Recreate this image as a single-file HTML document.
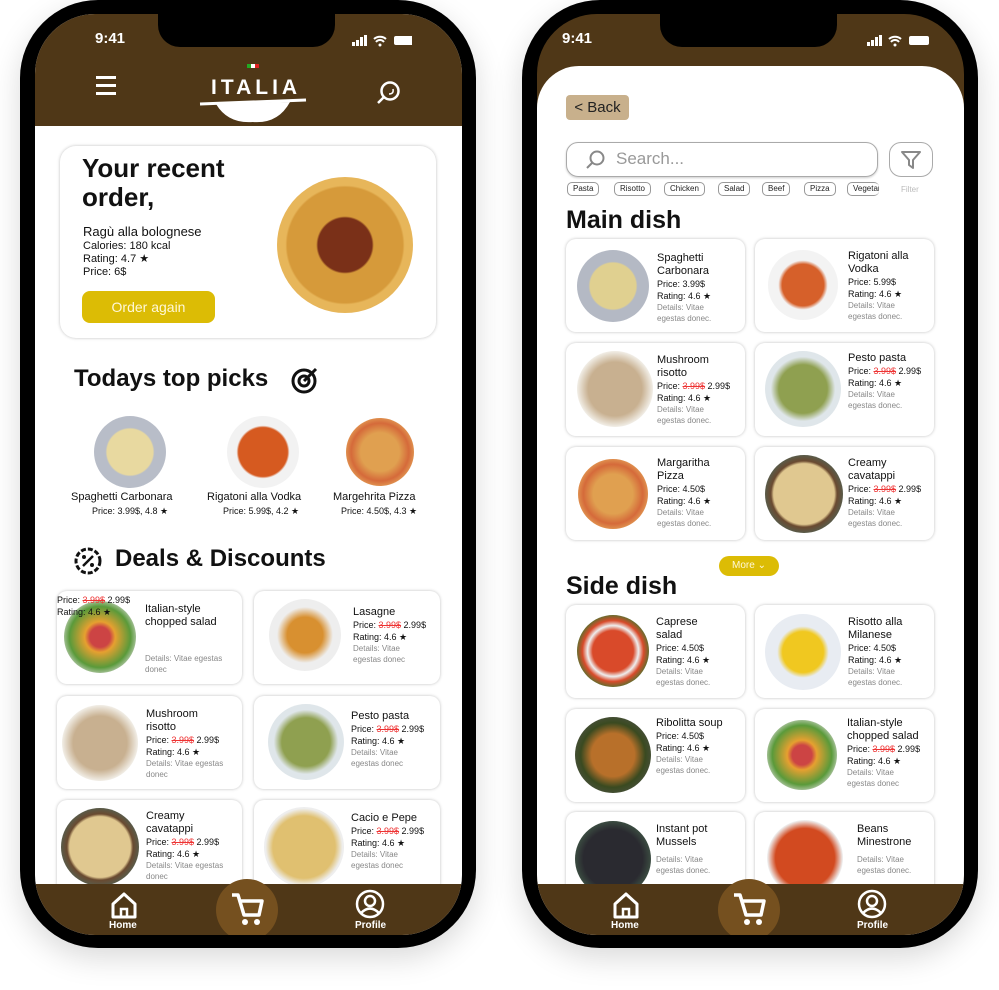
<!DOCTYPE html>
<html><head><meta charset="utf-8"><style>
*{margin:0;padding:0;box-sizing:border-box}
body{width:999px;height:990px;background:#fff;position:relative;overflow:hidden;font-family:"Liberation Sans",sans-serif;color:#111}
.a{position:absolute}
.ph{position:absolute;top:0;width:456px;height:948px;background:#000;border-radius:78px;box-shadow:0 10px 30px rgba(0,0,0,.15)}
.sc{position:absolute;left:15px;top:14px;width:427px;height:921px;border-radius:60px;overflow:hidden;background:#fff}
.brown{background:#4f3717}
.notch{position:absolute;left:123px;top:0;width:177px;height:33px;background:#000;border-radius:0 0 22px 22px}
.time{position:absolute;left:60px;top:16px;color:#fff;font-size:15px;font-weight:bold}
.nav{position:absolute;left:0;top:870px;width:427px;height:51px;background:#4f3717}
.cart{position:absolute;left:181px;top:-5px;width:62px;height:62px;border-radius:50%;background:#75501f}
.navl{position:absolute;color:#fff;font-size:10px;font-weight:bold}
.c{position:absolute;background:#fff;border-radius:10px;box-shadow:0 0 3px rgba(0,0,0,.25)}
.im{position:absolute;width:72px;height:72px;border-radius:50%}
.t{position:absolute;font-size:11px;line-height:13px}
.t i{font-style:normal;display:block;font-size:9px;line-height:12px}
.t b{font-weight:normal;display:block}
.t .d{color:#888;font-size:8px;line-height:11px}
.r{color:#e33;text-decoration:line-through}
.chip{position:absolute;top:182px;height:14px;border:1px solid #999;border-radius:5px;font-size:8px;line-height:12px;padding:0 5px;color:#222}
</style></head><body>

<!-- PHONE 1 -->
<div class="ph" style="left:20px">
<div class="sc">
 <div class="a brown" style="left:0;top:0;width:427px;height:112px"></div>
 <div class="notch"></div>
 <div class="time">9:41</div>
 <svg class="a" style="left:317px;top:20px" width="60" height="14"><rect x="0" y="8" width="3" height="4" fill="#fff"/><rect x="4" y="6" width="3" height="6" fill="#fff"/><rect x="8" y="3" width="3" height="9" fill="#fff"/><rect x="12" y="1" width="3" height="11" fill="#fff"/><path d="M22 5a9 9 0 0 1 12 0M24 8a5 5 0 0 1 8 0" stroke="#fff" stroke-width="2" fill="none"/><circle cx="28" cy="11" r="1.5" fill="#fff"/><rect x="42" y="2" width="20" height="9" rx="2" fill="#fff"/></svg>
 <div class="a" style="left:61px;top:70px;width:20px;height:3px;background:#fff;box-shadow:0 -8px 0 #fff,0 8px 0 #fff"></div>
 <div class="a" style="left:176px;top:62px;color:#fff;font-size:21px;font-weight:bold;letter-spacing:4px">ITALIA</div>
 <div class="a" style="left:212px;top:50px;width:12px;height:4px;background:linear-gradient(90deg,#2a2 33%,#fff 33% 66%,#d22 66%)"></div>
 <svg class="a" style="left:163px;top:78px" width="110" height="34"><path d="M2 12 L108 8" stroke="#fff" stroke-width="3"/><path d="M18 12 Q30 32 55 30 Q80 32 92 10" fill="#fff"/></svg>
 <svg class="a" style="left:340px;top:66px" width="26" height="26"><circle cx="15" cy="11" r="8.5" stroke="#fff" stroke-width="2.5" fill="none"/><path d="M9 17 L3 23" stroke="#fff" stroke-width="2.5"/><path d="M18 9 Q19 14 14 14" stroke="#fff" stroke-width="1.5" fill="none"/></svg>

 <div class="c" style="left:25px;top:132px;width:376px;height:192px;border-radius:16px"></div>
 <div class="a" style="left:47px;top:140px;font-size:26px;font-weight:bold;line-height:29px">Your recent<br>order,</div>
 <div class="a" style="left:48px;top:210px;font-size:13px">Ragù alla bolognese</div>
 <div class="a" style="left:48px;top:226px;font-size:11px;line-height:13px">Calories: 180 kcal<br>Rating: 4.7 ★<br>Price: 6$</div>
 <div class="a" style="left:47px;top:277px;width:133px;height:32px;background:#dcbc05;border-radius:8px;color:#fff8d8;font-size:14px;text-align:center;line-height:32px">Order again</div>
 <div class="a" style="left:242px;top:163px;width:136px;height:136px;border-radius:50%;background:radial-gradient(circle,#7a3018 0 28%,#d69a3a 30% 60%,#e7b65a 62% 80%,#cfe3ea 82%)"></div>

 <div class="a" style="left:39px;top:351px;font-size:24px;font-weight:bold">Todays top picks</div>
 <svg class="a" style="left:255px;top:352px" width="30" height="30"><circle cx="14" cy="15" r="11" stroke="#111" stroke-width="3" fill="none"/><circle cx="14" cy="15" r="5" stroke="#111" stroke-width="3" fill="none"/><path d="M14 15 L26 3" stroke="#111" stroke-width="3"/></svg>
 <div class="im" style="left:59px;top:402px;background:radial-gradient(circle,#e8d9a0 0 45%,#b8bdc8 48%)"></div>
 <div class="im" style="left:192px;top:402px;background:radial-gradient(circle,#d65a20 0 48%,#f2f2f2 52%)"></div>
 <div class="im" style="left:311px;top:404px;width:68px;height:68px;background:radial-gradient(circle,#e0a050 0 40%,#d56a3a 60%,#e8b060 80%)"></div>
 <div class="a" style="left:36px;top:477px;font-size:11px">Spaghetti Carbonara</div>
 <div class="a" style="left:57px;top:492px;font-size:9px">Price: 3.99$, 4.8 ★</div>
 <div class="a" style="left:172px;top:477px;font-size:11px">Rigatoni alla Vodka</div>
 <div class="a" style="left:188px;top:492px;font-size:9px">Price: 5.99$, 4.2 ★</div>
 <div class="a" style="left:298px;top:477px;font-size:11px">Margehrita Pizza</div>
 <div class="a" style="left:306px;top:492px;font-size:9px">Price: 4.50$, 4.3 ★</div>

 <svg class="a" style="left:37px;top:531px" width="32" height="32"><circle cx="16" cy="16" r="12" stroke="#111" stroke-width="3" fill="none" stroke-dasharray="5 2"/><path d="M11 21 L21 11" stroke="#111" stroke-width="2.5"/><circle cx="12" cy="12" r="2" fill="#111"/><circle cx="20" cy="20" r="2" fill="#111"/></svg>
 <div class="a" style="left:80px;top:531px;font-size:24px;font-weight:bold">Deals &amp; Discounts</div>

 <div class="c" style="left:22px;top:577px;width:185px;height:93px"><div class="im" style="left:7px;top:10px;background:radial-gradient(circle,#c44 0 20%,#e6a030 30%,#5a9a3a 60%,#ddd 80%)"></div><div class="t" style="left:88px;top:12px">Italian-style<br>chopped salad<i class="d" style="margin-top:24px">Details: Vitae egestas<br>donec</i></div></div>
 <div class="a" style="left:22px;top:580px;font-size:9px;line-height:12px">Price: <span class="r">3.99$</span> 2.99$<br>Rating: 4.6 ★</div>
 <div class="c" style="left:219px;top:577px;width:186px;height:93px"><div class="im" style="left:15px;top:8px;background:radial-gradient(circle,#d89030 0 35%,#eee 55%)"></div><div class="t" style="left:99px;top:15px">Lasagne<i>Price: <span class="r">3.99$</span> 2.99$</i><i>Rating: 4.6 ★</i><i class="d">Details: Vitae<br>egestas donec</i></div></div>
 <div class="c" style="left:22px;top:682px;width:185px;height:93px"><div class="im" style="left:5px;top:9px;width:76px;height:76px;background:radial-gradient(circle,#c8b090 0 50%,#f0ece4 70%)"></div><div class="t" style="left:89px;top:12px">Mushroom<br>risotto<i>Price: <span class="r">3.99$</span> 2.99$</i><i>Rating: 4.6 ★</i><i class="d">Details: Vitae egestas<br>donec</i></div></div>
 <div class="c" style="left:219px;top:682px;width:186px;height:93px"><div class="im" style="left:14px;top:8px;width:76px;height:76px;background:radial-gradient(circle,#8fa050 0 45%,#dfe6ea 60%)"></div><div class="t" style="left:97px;top:14px">Pesto pasta<i>Price: <span class="r">3.99$</span> 2.99$</i><i>Rating: 4.6 ★</i><i class="d">Details: Vitae<br>egestas donec</i></div></div>
 <div class="c" style="left:22px;top:786px;width:185px;height:93px"><div class="im" style="left:4px;top:8px;width:78px;height:78px;background:radial-gradient(circle,#e0c890 0 55%,#6a4a30 60%,#4a6a60 80%)"></div><div class="t" style="left:89px;top:10px">Creamy<br>cavatappi<i>Price: <span class="r">3.99$</span> 2.99$</i><i>Rating: 4.6 ★</i><i class="d">Details: Vitae egestas<br>donec</i></div></div>
 <div class="c" style="left:219px;top:786px;width:186px;height:93px"><div class="im" style="left:10px;top:7px;width:80px;height:80px;background:radial-gradient(circle,#e0c070 0 55%,#eee 68%)"></div><div class="t" style="left:97px;top:12px">Cacio e Pepe<i>Price: <span class="r">3.99$</span> 2.99$</i><i>Rating: 4.6 ★</i><i class="d">Details: Vitae<br>egestas donec</i></div></div>

 <div class="nav">
  <svg class="a" style="left:75px;top:7px" width="28" height="28"><path d="M3 13 L14 3 L25 13 V26 H3 Z" stroke="#fff" stroke-width="3" fill="none" stroke-linejoin="round"/><rect x="11" y="18" width="6" height="8" stroke="#fff" stroke-width="2.5" fill="none"/></svg>
  <div class="navl" style="left:74px;top:36px">Home</div>
  <div class="cart"><svg class="a" style="left:14px;top:12px" width="34" height="36"><path d="M2 4 H8 L14 24 H29 L32 10 H10" stroke="#fff" stroke-width="3.5" fill="none" stroke-linejoin="round"/><circle cx="15" cy="31" r="3" fill="#fff"/><circle cx="27" cy="31" r="3" fill="#fff"/></svg></div>
  <svg class="a" style="left:320px;top:5px" width="30" height="30"><circle cx="15" cy="15" r="13" stroke="#fff" stroke-width="2.5" fill="none"/><circle cx="15" cy="12" r="5" stroke="#fff" stroke-width="2.5" fill="none"/><path d="M6 24 Q15 15 24 24" stroke="#fff" stroke-width="2.5" fill="none"/></svg>
  <div class="navl" style="left:320px;top:36px">Profile</div>
 </div>
</div></div>

<!-- PHONE 2 -->
<div class="ph" style="left:522px">
<div class="sc brown">
 <div class="notch"></div>
 <div class="time" style="left:25px">9:41</div>
 <svg class="a" style="left:330px;top:20px" width="64" height="14"><rect x="0" y="8" width="3" height="4" fill="#fff"/><rect x="4" y="6" width="3" height="6" fill="#fff"/><rect x="8" y="3" width="3" height="9" fill="#fff"/><rect x="12" y="1" width="3" height="11" fill="#fff"/><path d="M22 5a9 9 0 0 1 12 0M24 8a5 5 0 0 1 8 0" stroke="#fff" stroke-width="2" fill="none"/><circle cx="28" cy="11" r="1.5" fill="#fff"/><rect x="42" y="2" width="20" height="9" rx="2" fill="#fff"/></svg>
 <div class="a" style="left:0;top:52px;width:427px;height:870px;background:#fff;border-radius:42px 42px 0 0"></div>
 <div class="a" style="left:29px;top:81px;width:63px;height:25px;background:#c8b08c;border-radius:4px;font-size:15px;line-height:25px;text-align:center;color:#222">&lt; Back</div>
 <div class="a" style="left:29px;top:128px;width:312px;height:35px;border:1.5px solid #aaa;border-radius:12px;box-shadow:0 1px 2px rgba(0,0,0,.2)"></div>
 <svg class="a" style="left:47px;top:135px" width="22" height="22"><circle cx="13" cy="9" r="6.5" stroke="#888" stroke-width="2" fill="none"/><path d="M8 14 L3 19" stroke="#888" stroke-width="2"/></svg>
 <div class="a" style="left:79px;top:135px;font-size:17px;color:#999">Search...</div>
 <div class="a" style="left:352px;top:128px;width:44px;height:35px;border:1.5px solid #aaa;border-radius:12px"></div>
 <svg class="a" style="left:362px;top:134px" width="24" height="24"><path d="M3 4 H21 L14 12 V20 L10 17 V12 Z" stroke="#888" stroke-width="2" fill="none" stroke-linejoin="round"/></svg>
 <div class="a" style="left:364px;top:171px;font-size:8px;color:#bbb">Filter</div>
 <div class="chip" style="left:30px;top:168px">Pasta</div>
 <div class="chip" style="left:77px;top:168px">Risotto</div>
 <div class="chip" style="left:127px;top:168px">Chicken</div>
 <div class="chip" style="left:181px;top:168px">Salad</div>
 <div class="chip" style="left:225px;top:168px">Beef</div>
 <div class="chip" style="left:267px;top:168px">Pizza</div>
 <div class="chip" style="left:310px;top:168px;width:32px;overflow:hidden;border-right:none">Vegetarian</div>

 <div class="a" style="left:29px;top:192px;font-size:25px;font-weight:bold">Main dish</div>
 <div class="c" style="left:29px;top:225px;width:179px;height:93px"><div class="im" style="left:11px;top:11px;background:radial-gradient(circle,#e0d090 0 45%,#b4b9c4 48%)"></div><div class="t" style="left:91px;top:13px">Spaghetti<br>Carbonara<i>Price: 3.99$</i><i>Rating: 4.6 ★</i><i class="d">Details: Vitae<br>egestas donec.</i></div></div>
 <div class="c" style="left:218px;top:225px;width:179px;height:93px"><div class="im" style="left:13px;top:11px;width:70px;height:70px;background:radial-gradient(circle,#d6602a 0 42%,#f3f3f3 50%)"></div><div class="t" style="left:93px;top:11px">Rigatoni alla<br>Vodka<i>Price: 5.99$</i><i>Rating: 4.6 ★</i><i class="d">Details: Vitae<br>egestas donec.</i></div></div>
 <div class="c" style="left:29px;top:329px;width:179px;height:93px"><div class="im" style="left:11px;top:8px;width:76px;height:76px;background:radial-gradient(circle,#c8b090 0 50%,#f0ece4 70%)"></div><div class="t" style="left:91px;top:11px">Mushroom<br>risotto<i>Price: <span class="r">3.99$</span> 2.99$</i><i>Rating: 4.6 ★</i><i class="d">Details: Vitae<br>egestas donec.</i></div></div>
 <div class="c" style="left:218px;top:329px;width:179px;height:93px"><div class="im" style="left:10px;top:8px;width:76px;height:76px;background:radial-gradient(circle,#8fa050 0 45%,#dfe6ea 60%)"></div><div class="t" style="left:93px;top:9px">Pesto pasta<i>Price: <span class="r">3.99$</span> 2.99$</i><i>Rating: 4.6 ★</i><i class="d">Details: Vitae<br>egestas donec.</i></div></div>
 <div class="c" style="left:29px;top:433px;width:179px;height:93px"><div class="im" style="left:12px;top:12px;width:70px;height:70px;background:radial-gradient(circle,#e0a050 0 40%,#d56a3a 60%,#e8b060 80%)"></div><div class="t" style="left:91px;top:10px">Margaritha<br>Pizza<i>Price: 4.50$</i><i>Rating: 4.6 ★</i><i class="d">Details: Vitae<br>egestas donec.</i></div></div>
 <div class="c" style="left:218px;top:433px;width:179px;height:93px"><div class="im" style="left:10px;top:8px;width:78px;height:78px;background:radial-gradient(circle,#e0c890 0 55%,#6a4a30 60%,#4a6a60 80%)"></div><div class="t" style="left:93px;top:10px">Creamy<br>cavatappi<i>Price: <span class="r">3.99$</span> 2.99$</i><i>Rating: 4.6 ★</i><i class="d">Details: Vitae<br>egestas donec.</i></div></div>
 <div class="a" style="left:182px;top:542px;width:60px;height:20px;background:#dcbc05;border-radius:10px;color:#fff8d8;font-size:10px;line-height:20px;text-align:center">More ⌄</div>

 <div class="a" style="left:29px;top:558px;font-size:25px;font-weight:bold">Side dish</div>
 <div class="c" style="left:29px;top:591px;width:179px;height:93px"><div class="im" style="left:11px;top:10px;background:radial-gradient(circle,#d94a2a 0 40%,#eee 50%,#d94a2a 60%,#3a7a30 75%,#eee 80%)"></div><div class="t" style="left:90px;top:11px">Caprese<br>salad<i>Price: 4.50$</i><i>Rating: 4.6 ★</i><i class="d">Details: Vitae<br>egestas donec.</i></div></div>
 <div class="c" style="left:218px;top:591px;width:179px;height:93px"><div class="im" style="left:10px;top:9px;width:76px;height:76px;background:radial-gradient(circle,#f0c820 0 38%,#e8ecf2 48%)"></div><div class="t" style="left:93px;top:11px">Risotto alla<br>Milanese<i>Price: 4.50$</i><i>Rating: 4.6 ★</i><i class="d">Details: Vitae<br>egestas donec.</i></div></div>
 <div class="c" style="left:29px;top:695px;width:179px;height:93px"><div class="im" style="left:9px;top:8px;width:76px;height:76px;background:radial-gradient(circle,#b8702a 0 40%,#3a4a20 60%,#555 90%)"></div><div class="t" style="left:90px;top:8px">Ribolitta soup<i>Price: 4.50$</i><i>Rating: 4.6 ★</i><i class="d">Details: Vitae<br>egestas donec.</i></div></div>
 <div class="c" style="left:218px;top:695px;width:179px;height:93px"><div class="im" style="left:12px;top:11px;width:70px;height:70px;background:radial-gradient(circle,#c44 0 20%,#e6a030 30%,#5a9a3a 60%,#ddd 80%)"></div><div class="t" style="left:92px;top:8px">Italian-style<br>chopped salad<i>Price: <span class="r">3.99$</span> 2.99$</i><i>Rating: 4.6 ★</i><i class="d">Details: Vitae<br>egestas donec</i></div></div>
 <div class="c" style="left:29px;top:798px;width:179px;height:93px"><div class="im" style="left:9px;top:9px;width:76px;height:76px;background:radial-gradient(circle,#2a2a30 0 55%,#3a4a40 70%,#555 90%)"></div><div class="t" style="left:90px;top:11px">Instant pot<br>Mussels<i class="d" style="margin-top:5px">Details: Vitae<br>egestas donec.</i></div></div>
 <div class="c" style="left:218px;top:798px;width:179px;height:93px"><div class="im" style="left:12px;top:8px;width:76px;height:76px;background:radial-gradient(circle,#d24a20 0 55%,#eee 70%)"></div><div class="t" style="left:102px;top:11px">Beans<br>Minestrone<i class="d" style="margin-top:5px">Details: Vitae<br>egestas donec.</i></div></div>

 <div class="nav">
  <svg class="a" style="left:75px;top:7px" width="28" height="28"><path d="M3 13 L14 3 L25 13 V26 H3 Z" stroke="#fff" stroke-width="3" fill="none" stroke-linejoin="round"/><rect x="11" y="18" width="6" height="8" stroke="#fff" stroke-width="2.5" fill="none"/></svg>
  <div class="navl" style="left:74px;top:36px">Home</div>
  <div class="cart"><svg class="a" style="left:14px;top:12px" width="34" height="36"><path d="M2 4 H8 L14 24 H29 L32 10 H10" stroke="#fff" stroke-width="3.5" fill="none" stroke-linejoin="round"/><circle cx="15" cy="31" r="3" fill="#fff"/><circle cx="27" cy="31" r="3" fill="#fff"/></svg></div>
  <svg class="a" style="left:320px;top:5px" width="30" height="30"><circle cx="15" cy="15" r="13" stroke="#fff" stroke-width="2.5" fill="none"/><circle cx="15" cy="12" r="5" stroke="#fff" stroke-width="2.5" fill="none"/><path d="M6 24 Q15 15 24 24" stroke="#fff" stroke-width="2.5" fill="none"/></svg>
  <div class="navl" style="left:320px;top:36px">Profile</div>
 </div>
</div></div>
</body></html>
